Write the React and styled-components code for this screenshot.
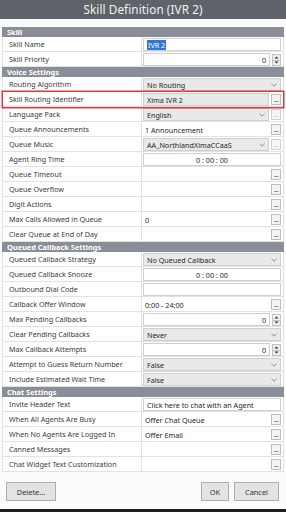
import React from "react";
import styled, { createGlobalStyle } from "styled-components";

const Global = createGlobalStyle`
  html, body {
    margin: 0;
    padding: 0;
    background: #fbfbfb;
  }
  * { box-sizing: border-box; }
`;

const Window = styled.div`
  width: 286px;
  height: 512px;
  display: flex;
  flex-direction: column;
  font-family: "Noto Sans", "Open Sans", sans-serif;
  color: #3a3a3a;
  background: #fbfbfb;
  border-bottom: 3px solid #1d1d1d;
`;

const TitleBar = styled.div`
  height: 19px;
  background: #5f6268;
  color: #f2f2f2;
  font-size: 11.7px;
  line-height: 19px;
  text-align: center;
  letter-spacing: 0.1px;
`;

const Grid = styled.div`
  margin: 8px 2px 0;
  display: flex;
  flex-direction: column;
  border-left: 1px solid #e2e2e2;
  border-right: 1px solid #e2e2e2;
`;

const Header = styled.div`
  height: 10px;
  background: #8a8e98;
  color: #fff;
  font-size: 7.4px;
  font-weight: 700;
  line-height: 10px;
  padding-left: 5px;
  margin: 0 -1px;
`;

const Row = styled.div`
  display: grid;
  grid-template-columns: 139px 1fr;
  height: 15px;
  background: #fff;
  border-bottom: 1px solid #e2e2e2;
  ${p => p.$highlight && `
    box-shadow: 0 0 0 1.5px #e8373c;
    position: relative;
    z-index: 1;
  `}
`;

const Label = styled.div`
  font-size: 7.2px;
  line-height: 14px;
  padding-left: 6px;
  border-right: 1px solid #e2e2e2;
  white-space: nowrap;
  overflow: hidden;
`;

const Value = styled.div`
  display: flex;
  align-items: center;
  gap: 2px;
  padding: 1px 2px 1px 1px;
  font-size: 7.2px;
  color: #262626;
  min-width: 0;
`;

const Field = styled.div`
  flex: 1;
  height: 13px;
  display: flex;
  align-items: center;
  justify-content: ${p => (p.$center ? "center" : p.$right ? "flex-end" : "flex-start")};
  padding: 0 3px;
  white-space: nowrap;
  overflow: hidden;
  border: 1px solid ${p => (p.$plain ? "transparent" : "#cfcfcf")};
  background: ${p => (p.$gray ? "#e9e9e9" : "#fff")};
  padding-left: ${p => (p.$plain ? "1px" : "3px")};
`;

const Selected = styled.span`
  background: #3277d5;
  color: #fff;
  padding: 0 1px;
`;

const Chevron = styled.svg`
  margin-left: auto;
  flex-shrink: 0;
`;

const Dots = styled.div`
  width: 10px;
  height: 11px;
  flex-shrink: 0;
  border: 1px solid #bdbdbd;
  background: #f3f3f3;
  color: ${p => (p.$disabled ? "#a8a8a8" : "#444")};
  font-size: 7px;
  line-height: 9px;
  text-align: center;
  letter-spacing: -0.5px;
  opacity: ${p => (p.$disabled ? 0.7 : 1)};
`;

const Spin = styled.div`
  width: 9px;
  height: 12px;
  flex-shrink: 0;
  display: grid;
  grid-template-rows: 1fr 1fr;
  border: 1px solid #c4c4c4;
  background: #eeeeee;
`;

const SpinHalf = styled.div`
  display: flex;
  align-items: center;
  justify-content: center;
  border-top: ${p => (p.$down ? "1px solid #c4c4c4" : "none")};
`;

const Footer = styled.div`
  display: flex;
  align-items: center;
  gap: 5px;
  padding: 10px 7px 0 6px;
`;

const Button = styled.div`
  height: 19px;
  width: ${p => p.$w}px;
  margin-right: ${p => (p.$push ? "auto" : "0")};
  border: 1px solid #adadad;
  background: #e3e3e3;
  font-size: 7.4px;
  color: #333;
  display: flex;
  align-items: center;
  justify-content: center;
`;

const ChevronIcon = () => (
  <Chevron width="6" height="4" viewBox="0 0 6 4">
    <path d="M0.5 0.8 L3 3.2 L5.5 0.8" fill="none" stroke="#777" strokeWidth="0.8" />
  </Chevron>
);

const Spinner = () => (
  <Spin>
    <SpinHalf>
      <svg width="5" height="3" viewBox="0 0 5 3"><path d="M0.5 2.6 L2.5 0.4 L4.5 2.6Z" fill="#333" /></svg>
    </SpinHalf>
    <SpinHalf $down>
      <svg width="5" height="3" viewBox="0 0 5 3"><path d="M0.5 0.4 L2.5 2.6 L4.5 0.4Z" fill="#333" /></svg>
    </SpinHalf>
  </Spin>
);

const Cell = ({ kind, text, dots, disabledDots }) => {
  let field = null;
  if (kind === "input") field = <Field>{text}</Field>;
  if (kind === "time") field = <Field $center>{text}</Field>;
  if (kind === "gray") field = <Field $gray>{text}</Field>;
  if (kind === "select")
    field = (
      <Field $gray>
        {text}
        <ChevronIcon />
      </Field>
    );
  if (kind === "spin")
    field = <Field $right>{text}</Field>;
  if (kind === "plain" || !kind) field = <Field $plain>{text}</Field>;
  if (kind === "selected")
    field = (
      <Field>
        <Selected>{text}</Selected>
      </Field>
    );
  return (
    <Value>
      {field}
      {kind === "spin" && <Spinner />}
      {dots && <Dots $disabled={disabledDots}>...</Dots>}
    </Value>
  );
};

const sections = [
  {
    title: "Skill",
    rows: [
      { label: "Skill Name", kind: "selected", text: "IVR 2" },
      { label: "Skill Priority", kind: "spin", text: "0" },
    ],
  },
  {
    title: "Voice Settings",
    rows: [
      { label: "Routing Algorithm", kind: "select", text: "No Routing" },
      { label: "Skill Routing Identifier", kind: "gray", text: "Xima IVR 2", dots: true, highlight: true },
      { label: "Language Pack", kind: "select", text: "English", dots: true, disabledDots: true },
      { label: "Queue Announcements", kind: "plain", text: "1 Announcement", dots: true },
      { label: "Queue Music", kind: "select", text: "AA_NorthlandXimaCCaaS", dots: true, disabledDots: true },
      { label: "Agent Ring Time", kind: "time", text: "0 : 00 : 00" },
      { label: "Queue Timeout", kind: "plain", text: "", dots: true },
      { label: "Queue Overflow", kind: "plain", text: "", dots: true },
      { label: "Digit Actions", kind: "plain", text: "", dots: true },
      { label: "Max Calls Allowed in Queue", kind: "plain", text: "0", dots: true },
      { label: "Clear Queue at End of Day", kind: "plain", text: "", dots: true },
    ],
  },
  {
    title: "Queued Callback Settings",
    rows: [
      { label: "Queued Callback Strategy", kind: "select", text: "No Queued Callback" },
      { label: "Queued Callback Snooze", kind: "time", text: "0 : 00 : 00" },
      { label: "Outbound Dial Code", kind: "input", text: "" },
      { label: "Callback Offer Window", kind: "plain", text: "0:00 - 24:00", dots: true },
      { label: "Max Pending Callbacks", kind: "spin", text: "0" },
      { label: "Clear Pending Callbacks", kind: "select", text: "Never" },
      { label: "Max Callback Attempts", kind: "spin", text: "0" },
      { label: "Attempt to Guess Return Number", kind: "select", text: "False" },
      { label: "Include Estimated Wait Time", kind: "select", text: "False" },
    ],
  },
  {
    title: "Chat Settings",
    rows: [
      { label: "Invite Header Text", kind: "input", text: "Click here to chat with an Agent" },
      { label: "When All Agents Are Busy", kind: "plain", text: "Offer Chat Queue", dots: true },
      { label: "When No Agents Are Logged In", kind: "plain", text: "Offer Email", dots: true },
      { label: "Canned Messages", kind: "plain", text: "", dots: true },
      { label: "Chat Widget Text Customization", kind: "plain", text: "", dots: true },
    ],
  },
];

export default function App() {
  return (
    <Window>
      <Global />
      <TitleBar>Skill Definition (IVR 2)</TitleBar>
      <Grid>
        {sections.map(s => (
          <React.Fragment key={s.title}>
            <Header>{s.title}</Header>
            {s.rows.map(r => (
              <Row key={r.label} $highlight={r.highlight}>
                <Label>{r.label}</Label>
                <Cell {...r} />
              </Row>
            ))}
          </React.Fragment>
        ))}
      </Grid>
      <Footer>
        <Button $w={50} $push>Delete...</Button>
        <Button $w={28}>OK</Button>
        <Button $w={45}>Cancel</Button>
      </Footer>
    </Window>
  );
}
